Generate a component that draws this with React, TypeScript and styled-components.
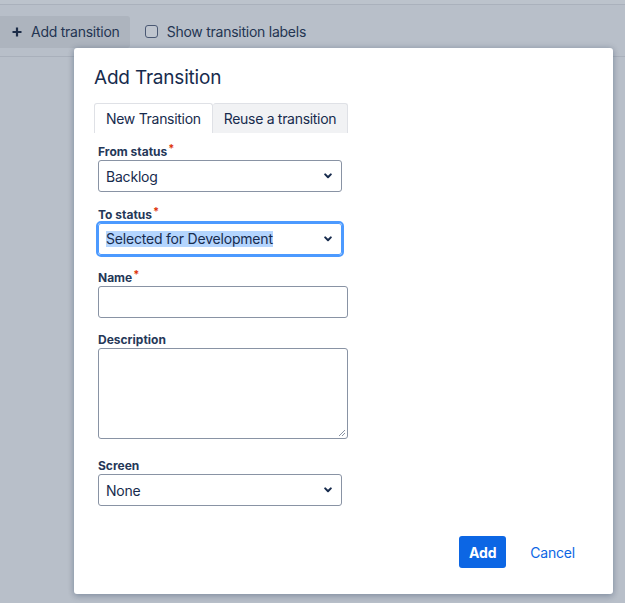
import React from 'react';
import styled, { createGlobalStyle } from 'styled-components';

const GlobalStyle = createGlobalStyle`
  html, body {
    margin: 0;
    padding: 0;
    background: #b8bfc9;
    font-family: Inter, "Noto Sans", "Liberation Sans", sans-serif;
    color: #172b4d;
  }
  * { box-sizing: border-box; }
`;

const Page = styled.div`
  position: relative;
  width: 625px;
  height: 603px;
  overflow: hidden;
  background: #b8bfc9;
`;

const TopStrip = styled.div`
  height: 5px;
  background: #bcc3cc;
  border-bottom: 1px solid #aab1bc;
`;

const Toolbar = styled.div`
  display: flex;
  align-items: center;
  gap: 15px;
  height: 52px;
  padding-top: 2px;
  border-bottom: 1px solid #a9b0bb;
`;

const ToolButton = styled.div`
  display: flex;
  align-items: center;
  gap: 9px;
  height: 32px;
  padding: 0 10px 0 12px;
  background: #adb4be;
  border-radius: 0 3px 3px 0;
  font-size: 14px;
  letter-spacing: -0.25px;
  color: #243552;
`;

const CheckLabel = styled.label`
  display: flex;
  align-items: center;
  gap: 9px;
  font-size: 14px;
  letter-spacing: -0.25px;
  color: #243552;
`;

const CheckBox = styled.span`
  width: 13px;
  height: 13px;
  border: 1px solid #4a5873;
  border-radius: 3px;
  background: #bfc5ce;
`;

const Modal = styled.div`
  position: absolute;
  left: 74px;
  top: 48px;
  width: 539px;
  height: 546px;
  background: #fff;
  border-radius: 3px;
  box-shadow: 0 0 6px rgba(9, 30, 66, 0.22), 0 3px 6px rgba(9, 30, 66, 0.15);
  padding: 18px 20px 26px 20px;
  display: flex;
  flex-direction: column;
`;

const Title = styled.h2`
  margin: 0;
  font-size: 19px;
  line-height: 24px;
  font-weight: 400;
  letter-spacing: -0.2px;
  color: #172b4d;
`;

const Tabs = styled.div`
  display: flex;
  margin-top: 13px;
`;

const Tab = styled.div<{ $active?: boolean }>`
  height: 30px;
  display: flex;
  align-items: center;
  padding: 0 11px;
  font-size: 14px;
  letter-spacing: -0.3px;
  color: #172b4d;
  border: 1px solid #dfe1e6;
  border-bottom: none;
  border-left: ${p => (p.$active ? '1px solid #dfe1e6' : 'none')};
  border-radius: 3px 3px 0 0;
  background: ${p => (p.$active ? '#ffffff' : '#f1f2f4')};
`;

const Form = styled.div`
  padding-left: 4px;
  display: flex;
  flex-direction: column;
`;

const Field = styled.div<{ $gap: number }>`
  display: flex;
  flex-direction: column;
  margin-top: ${p => p.$gap}px;
`;

const Label = styled.div`
  font-size: 12px;
  line-height: 16px;
  font-weight: 700;
  color: #253858;
`;

const Req = styled.span`
  color: #de350b;
  font-size: 11px;
  position: relative;
  top: -4px;
  margin-left: 1px;
`;

const SelectBox = styled.div<{ $focused?: boolean }>`
  width: 244px;
  height: 32px;
  display: flex;
  align-items: center;
  justify-content: space-between;
  padding: 0 9px 0 7px;
  border: 1px solid ${p => (p.$focused ? '#4c9aff' : '#8993a4')};
  outline: ${p => (p.$focused ? '2px solid #4c9aff' : 'none')};
  border-radius: 3px;
  background: #fff;
  font-size: 14px;
  letter-spacing: -0.2px;
  color: #172b4d;
`;

const Highlight = styled.span`
  background: #b4d5fe;
  line-height: 16px;
`;

const TextInput = styled.div`
  width: 250px;
  height: 32px;
  border: 1px solid #8993a4;
  border-radius: 3px;
  background: #fff;
`;

const TextArea = styled.div`
  position: relative;
  width: 250px;
  height: 91px;
  border: 1px solid #8993a4;
  border-radius: 3px;
  background: #fff;
`;

const Grip = styled.svg`
  position: absolute;
  right: 1px;
  bottom: 1px;
`;

const Footer = styled.div`
  margin-top: auto;
  display: flex;
  justify-content: flex-end;
  align-items: center;
  gap: 24px;
  padding-right: 18px;
`;

const PrimaryButton = styled.div`
  height: 32px;
  padding: 0 10px;
  display: flex;
  align-items: center;
  background: #0c66e4;
  border-radius: 3px;
  color: #fff;
  font-size: 14px;
  letter-spacing: -0.2px;
  font-weight: 700;
`;

const LinkButton = styled.div`
  font-size: 14px;
  letter-spacing: -0.2px;
  color: #0c66e4;
`;

const Chevron = () => (
  <svg width="8" height="6" viewBox="0 0 8 6">
    <path d="M1.2 1.4 L4 4.2 L6.8 1.4" fill="none" stroke="#172b4d" strokeWidth="2" strokeLinecap="round" strokeLinejoin="round" />
  </svg>
);

const Plus = () => (
  <svg width="10" height="10" viewBox="0 0 10 10">
    <path d="M5 0.5 V9.5 M0.5 5 H9.5" stroke="#1d2d48" strokeWidth="2.2" />
  </svg>
);

const App: React.FC = () => (
  <Page>
    <GlobalStyle />
    <TopStrip />
    <Toolbar>
      <ToolButton>
        <Plus />
        Add transition
      </ToolButton>
      <CheckLabel>
        <CheckBox />
        Show transition labels
      </CheckLabel>
    </Toolbar>

    <Modal>
      <Title>Add Transition</Title>
      <Tabs>
        <Tab $active>New Transition</Tab>
        <Tab>Reuse a transition</Tab>
      </Tabs>
      <Form>
        <Field $gap={11}>
          <Label>From status<Req>*</Req></Label>
          <SelectBox>
            Backlog
            <Chevron />
          </SelectBox>
        </Field>
        <Field $gap={15}>
          <Label>To status<Req>*</Req></Label>
          <SelectBox $focused>
            <Highlight>Selected for Development</Highlight>
            <Chevron />
          </SelectBox>
        </Field>
        <Field $gap={15}>
          <Label>Name<Req>*</Req></Label>
          <TextInput />
        </Field>
        <Field $gap={14}>
          <Label>Description</Label>
          <TextArea>
            <Grip width="8" height="8" viewBox="0 0 8 8">
              <path d="M7 1 L1 7 M7 4 L4 7" stroke="#8993a4" strokeWidth="1" />
            </Grip>
          </TextArea>
        </Field>
        <Field $gap={19}>
          <Label>Screen</Label>
          <SelectBox>
            None
            <Chevron />
          </SelectBox>
        </Field>
      </Form>
      <Footer>
        <PrimaryButton>Add</PrimaryButton>
        <LinkButton>Cancel</LinkButton>
      </Footer>
    </Modal>
  </Page>
);

export default App;
